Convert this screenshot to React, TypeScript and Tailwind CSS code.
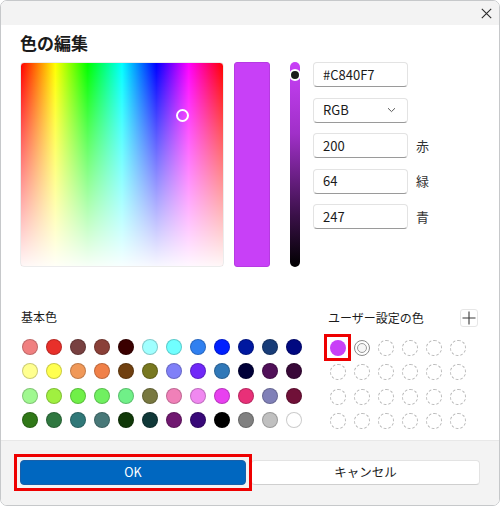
import React from "react";

const basic: string[][] = [
  ["#f08080", "#e8302a", "#784040", "#8a4038", "#3a0000", "#a0ffff", "#70ffff", "#3080f0", "#0020ff", "#0018a0", "#183c78", "#000880"],
  ["#ffff90", "#ffff50", "#f09858", "#f08048", "#704010", "#787820", "#8080f8", "#7028f8", "#3078b8", "#000038", "#501058", "#380838"],
  ["#a0f890", "#a0f040", "#70f048", "#70f060", "#70f088", "#787840", "#f080b8", "#f088f0", "#e840f0", "#e83078", "#8080b8", "#701038"],
  ["#307818", "#307840", "#307878", "#487878", "#103808", "#103838", "#701870", "#380878", "#000000", "#808080", "#c0c0c0", "#ffffff"],
];

function Field({ value, label, chevron }: { value: string; label?: string; chevron?: boolean }) {
  return (
    <div className="flex items-center">
      <div className="w-[95px] h-[25px] rounded-[4px] border border-[#e3e3e3] border-b-[#9a9a9a] bg-white flex items-center justify-between pl-[9px] pr-[10px] text-[13px] text-[#1a1a1a]">
        <span>{value}</span>
        {chevron && (
          <svg width="9" height="6" viewBox="0 0 9 6" className="mr-[1px]">
            <path d="M1 1.2 L4.5 4.6 L8 1.2" fill="none" stroke="#5a5a5a" strokeWidth="1" />
          </svg>
        )}
      </div>
      {label && <span className="ml-[8px] text-[13px] text-[#333]">{label}</span>}
    </div>
  );
}

export default function App() {
  return (
    <div className="w-[500px] h-[506px] bg-white font-['Noto_Sans_CJK_JP','Noto_Sans',sans-serif]">
      <div className="relative w-[500px] h-[506px] border border-[#c6c8ca] rounded-[7px] overflow-hidden flex flex-col bg-white">
        {/* title bar */}
        <div className="h-[24px] bg-[#f3f3f3] flex justify-end items-center pr-[7px] shrink-0">
          <svg width="11" height="11" viewBox="0 0 11 11">
            <path d="M0.8 0.8 L10.2 10.2 M10.2 0.8 L0.8 10.2" stroke="#2a2a2a" strokeWidth="1.1" />
          </svg>
        </div>

        <div className="flex-1 pl-[19px]">
          <div className="mt-[6px] text-[17px] font-bold text-[#1b1b1b] leading-[24px]">色の編集</div>

          <div className="flex mt-[7px] h-[205px]">
            <div className="relative w-[204px] h-[205px] rounded-[4px] border border-[#ececec] bg-[linear-gradient(to_bottom,rgba(255,255,255,0)_0%,rgba(255,255,255,0.35)_35%,rgba(255,255,255,0.97)_100%),linear-gradient(to_right,#ff0000_0%,#ffff00_17%,#00ff00_33%,#00ffff_50%,#0000ff_67%,#ff00ff_83%,#ff0000_100%)]">
              <div className="absolute left-[155px] top-[46px] w-[13px] h-[13px] rounded-full border-2 border-white" />
            </div>
            <div className="ml-[10px] w-[36px] h-[205px] rounded-[3px] bg-[#c840f7] border border-[#b63ae2]" />
            <div className="relative ml-[20px] w-[10px] h-[205px] rounded-full bg-[linear-gradient(to_bottom,#c840f7,#a030c8_35%,#3a1048_75%,#000000)]">
              <div className="absolute left-[-1px] top-[7px] w-[12px] h-[12px] rounded-full bg-[#1a1a1a] border-2 border-white" />
            </div>
            <div className="ml-[13px] flex flex-col gap-[10.5px]">
              <Field value="#C840F7" />
              <Field value="RGB" chevron />
              <Field value="200" label="赤" />
              <Field value="64" label="緑" />
              <Field value="247" label="青" />
            </div>
          </div>

          <div className="flex mt-[41px]">
            <div className="w-[308px]">
              <div className="text-[12px] leading-[18px] text-[#1b1b1b] ml-[1px]">基本色</div>
              <div className="grid grid-cols-[repeat(12,16px)] gap-x-[8px] gap-y-[8.3px] mt-[13px] ml-[2px]">
                {basic.flat().map((c, i) => (
                  <div key={i} className="w-[16px] h-[16px] rounded-full border border-[rgba(0,0,0,0.2)]" style={{ backgroundColor: c }} />
                ))}
              </div>
            </div>
            <div className="w-[150px]">
              <div className="flex items-center justify-between">
                <span className="text-[12px] leading-[18px] text-[#1b1b1b]">ユーザー設定の色</span>
                <div className="w-[18px] h-[18px] mt-[1px] rounded-[3px] border border-[#e6e6e6] bg-white flex items-center justify-center">
                  <svg width="14" height="14" viewBox="0 0 14 14">
                    <path d="M7 0.5 V13.5 M0.5 7 H13.5" stroke="#3a3a3a" strokeWidth="1.1" />
                  </svg>
                </div>
              </div>
              <div className="relative grid grid-cols-[repeat(6,16px)] gap-x-[8px] gap-y-[8.3px] mt-[13px] ml-[2px]">
                {Array.from({ length: 24 }).map((_, i) => {
                  if (i === 0) return <div key={i} className="w-[16px] h-[16px] rounded-full bg-[#c840f7]" />;
                  if (i === 1)
                    return (
                      <div key={i} className="w-[16px] h-[16px] rounded-full border border-[#8a8a8a] p-[2px] flex">
                        <div className="flex-1 rounded-full border border-[#9a9a9a] bg-[#f6f6f6]" />
                      </div>
                    );
                  return <div key={i} className="w-[16px] h-[16px] rounded-full border border-dashed border-[#b8b8b8]" />;
                })}
                <div className="absolute left-[-6px] top-[-6px] w-[27px] h-[27px] border-[3px] border-[#ee0000]" />
              </div>
            </div>
          </div>
        </div>

        {/* footer */}
        <div className="relative h-[65px] bg-[#f3f3f3] border-t border-[#e8e8e8] flex items-start pt-[19px] pl-[19px] gap-[5px] shrink-0">
          <div className="w-[226px] h-[25px] rounded-[4px] bg-[#0067c0] border border-[#1a5fa8] text-white text-[12.5px] flex items-center justify-center">
            OK
          </div>
          <div className="w-[229px] h-[25px] rounded-[4px] bg-white border border-[#e3e3e3] border-b-[#cfcfcf] text-[#1b1b1b] text-[12.5px] flex items-center justify-center">
            キャンセル
          </div>
          <div className="absolute left-[13px] top-[13px] w-[238px] h-[37px] border-[3px] border-[#ee0000]" />
        </div>
      </div>
    </div>
  );
}
